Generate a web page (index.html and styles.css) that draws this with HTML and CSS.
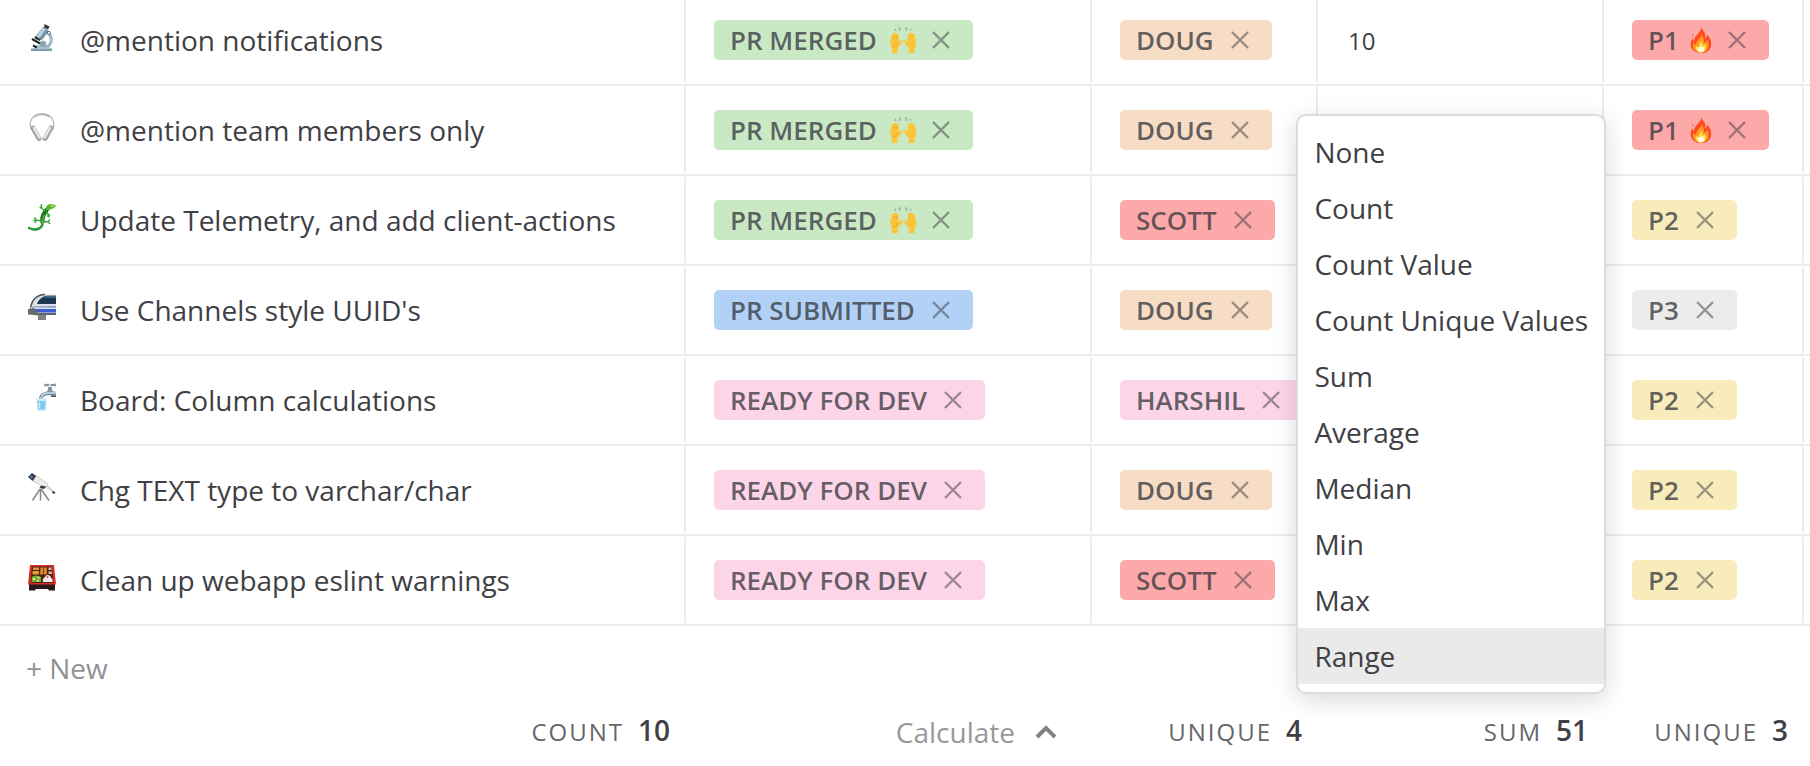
FILE: index.html
```html
<!DOCTYPE html>
<html lang="en">
<head>
    <meta charset="utf-8">
    <meta name="viewport" content="width=device-width, initial-scale=1">
    <title>Board</title>
    <link rel="stylesheet" href="styles.css">
</head>
<body>
    <!-- Shared icons -->
    <svg class="sprite" aria-hidden="true">
        <symbol id="close" viewBox="0 0 18 18">
            <path d="M1 1L17 17M17 1L1 17" fill="none" stroke="currentColor" stroke-width="2.4"/>
        </symbol>
        <symbol id="hands" viewBox="0 0 26 26">
            <path d="M4 3.500l1.500-2.500 1 3zM8.500 .5h2.500l-.8 3.500H9zM15 .5h2.500l-.5 3.500h-1.200zM19.500 3.500l.5-2.500 2 2.500z" fill="#a2b3a0"/>
            <path id="hand" d="M1 19.500L.2 13.200Q0 11.800 1.300 12l.3-4.500Q2.500 6.300 3.500 7.300L4 6.200Q5 5 6 6.200l.8.600q1.200-.9 1.800.4L9.200 15l2.400-1.600q1.500-.5 1.500.7l-3.600 5-2 2.500V26H2v-4.500z" fill="#fcc437"/>
            <path d="M2.500 20.500Q6 19.500 7.500 16M3.900 9v3M6.300 9v3M24 20.500Q20.500 19.500 19 16M22.600 9v3M20.200 9v3" fill="none" stroke="#dc9820" stroke-width=".7"/>
            <use href="#hand" transform="matrix(-1 0 0 1 26.500 0)"/>
        </symbol>
        <symbol id="fire" viewBox="0 0 22 26">
            <path d="M11.500 0c-.3 2.500 3.600 4.700 3.900 8.300.1 1.600-.2 2.600-.4 3.500 1.500-.8 2-2.600 2-4.200 2.800 2.700 4.400 6.400 4.200 9.800C21 22.300 17 26 11 26S.8 22.300.7 17.500C.6 14.800 1.500 13 3 11c0 1.600.2 2.800 1.200 3.700C3.300 8.800 10.800 6.500 11.500 0z" fill="#ff4a1f"/>
            <path d="M2.500 6.500l1.200 2.200L2 9z" fill="#ff6a35"/>
            <path d="M11.800 7.500c1.800 3.300 2.500 5.500 2.200 8 1.700-.2 2.800-1.300 3.400-2.700 1.200 2 1.600 4.200 1 6.600C17.700 23.500 15 25.500 11 25.500S3.500 23 3 19.500c-.2-1.600 0-2.700.8-4.200.4 1.500 1.200 2.200 2.400 2.400-.5-4.200 4.300-6.200 5.600-10.200z" fill="#ff9a24"/>
            <path d="M11.500 13.500c.8 2.300.8 3.700.5 5 1.500 0 2.500-.4 3.400-1.400.8 2 .7 4-.3 5.800-1 1.700-2.300 2.500-4.300 2.500-2.700 0-5-1.700-5.200-4.700 0-.7.100-1.300.4-2 .8 1 1.700 1.300 2.900 1.200-.3-2.600 1.800-4 2.600-6.400z" fill="#ffe04f"/>
            <ellipse cx="11" cy="22.500" rx="3.200" ry="2.700" fill="#fffbe0"/>
        </symbol>
    </svg>

    <main class="board">
        <table class="grid">
            <colgroup>
                <col>
                <col class="col-status">
                <col class="col-owner">
                <col class="col-points">
                <col class="col-priority">
                <col class="col-end">
            </colgroup>
            <tbody>
                <tr>
                    <td>
                        <div class="cell title">
                            <svg class="emoji" viewBox="0 0 28 28">
                                <path d="M3 25.500h21V28H3z" fill="#7f9cac"/>
                                <path d="M6 25.500l3-3.500h10l4 3.500z" fill="#a9c3cf"/>
                                <path d="M19 9q5 3.500 4 9.500-1 4.500-6 6.500" fill="none" stroke="#9dbac8" stroke-width="3.200"/>
                                <circle cx="15" cy="21" r="3.200" fill="#8aa7b6"/>
                                <path d="M4 16l8 4.500M5 22.500l4 2" stroke="#24282c" stroke-width="2.200"/>
                                <path d="M15 4l6 4-7 9-7-3z" fill="#7895a8"/>
                                <path d="M14.500 5l3 1.500-6 8.500-3-1.500z" fill="#bcd4e2"/>
                                <path d="M16.500 1l5 2.500-1.500 3-4-2zM7 13l6 3.500-1.500 1.500-5-2.500z" fill="#34383c"/>
                                <circle cx="21" cy="10" r="1.600" fill="#edf3f5" stroke="#4f5d65" stroke-width=".8"/>
                            </svg>
                            <span>@mention notifications</span>
                        </div>
                    </td>
                    <td><div class="cell"><span class="chip green">PR MERGED<svg class="hands"><use href="#hands"/></svg><button aria-label="Remove"><svg><use href="#close"/></svg></button></span></div></td>
                    <td><div class="cell"><span class="chip orange">DOUG<button aria-label="Remove"><svg><use href="#close"/></svg></button></span></div></td>
                    <td><div class="cell number">10</div></td>
                    <td><div class="cell"><span class="chip red">P1<svg class="fire"><use href="#fire"/></svg><button aria-label="Remove"><svg><use href="#close"/></svg></button></span></div></td>
                    <td></td>
                </tr>
                <tr>
                    <td>
                        <div class="cell title">
                            <svg class="emoji" viewBox="0 0 28 28">
                                <path d="M3.500 17C0 9 4 1 14 1s14 8 10.500 16" fill="none" stroke="#b8b8bc" stroke-width="1.300"/>
                                <path d="M6.500 3.700Q14-1 21.500 3.700" fill="none" stroke="#b8b8bc" stroke-width="2"/>
                                <path d="M5 15l6 10.500M23 15l-6 10.500" stroke="#a2a2a8" stroke-width="5" stroke-linecap="round"/>
                                <path d="M6 15l5.500 9.500M22 15l-5.500 9.500" stroke="#e6e6ea" stroke-width="2.600" stroke-linecap="round"/>
                            </svg>
                            <span>@mention team members only</span>
                        </div>
                    </td>
                    <td><div class="cell"><span class="chip green">PR MERGED<svg class="hands"><use href="#hands"/></svg><button aria-label="Remove"><svg><use href="#close"/></svg></button></span></div></td>
                    <td><div class="cell"><span class="chip orange">DOUG<button aria-label="Remove"><svg><use href="#close"/></svg></button></span></div></td>
                    <td><div class="cell number"></div></td>
                    <td><div class="cell"><span class="chip red">P1<svg class="fire"><use href="#fire"/></svg><button aria-label="Remove"><svg><use href="#close"/></svg></button></span></div></td>
                    <td></td>
                </tr>
                <tr>
                    <td>
                        <div class="cell title">
                            <svg class="emoji" viewBox="0 0 28 28">
                                <path d="M1 25q7 3.500 11.500-.5 3-3 2-7t2-6.500q2.500-3 3.500-6" fill="none" stroke="#2b9a2f" stroke-width="2.500" stroke-linecap="round"/>
                                <path d="M15 20q-1.500-5 1-9 2-3 3-5" fill="none" stroke="#157a20" stroke-width="4.500"/>
                                <path d="M17.500 7q.5-6 5-6 4.500 0 5.500 2-2 3-5.500 3.500z" fill="#55b82a"/>
                                <path d="M22 2q3-.5 5 1l-3 1z" fill="#c7e052"/>
                                <path d="M17 8l-4-3 .5-4M11.500 4.500l3-.5M18 9l3 3-.5 2.500M19 13l3-.5M14 18l-6-1-1.500-2.500M5.500 17.500L8 17M8 17l-1 3M15 19l5-.500 2 2.500M20 18.500l2-2" fill="none" stroke="#3aa834" stroke-width="1.500"/>
                                <path d="M15 21q-1-6 1.500-9" fill="none" stroke="#8fd05a" stroke-width="1"/>
                            </svg>
                            <span>Update Telemetry, and add client-actions</span>
                        </div>
                    </td>
                    <td><div class="cell"><span class="chip green">PR MERGED<svg class="hands"><use href="#hands"/></svg><button aria-label="Remove"><svg><use href="#close"/></svg></button></span></div></td>
                    <td><div class="cell"><span class="chip red">SCOTT<button aria-label="Remove"><svg><use href="#close"/></svg></button></span></div></td>
                    <td><div class="cell number"></div></td>
                    <td><div class="cell"><span class="chip yellow">P2<button aria-label="Remove"><svg><use href="#close"/></svg></button></span></div></td>
                    <td></td>
                </tr>
                <tr>
                    <td>
                        <div class="cell title">
                            <svg class="emoji" viewBox="0 0 28 28">
                                <path d="M0 17h28v5H18v5h-8v-4.500L0 21.500z" fill="#7c8282"/>
                                <path d="M2 17Q4 2 17 1.500h11V20H8z" fill="#dde1e4"/>
                                <path d="M2.500 14.500Q5 2 17 1.500" fill="none" stroke="#4a525a" stroke-width="1.500"/>
                                <path d="M9 11Q12 3 20 3h8v8z" fill="#1d3850"/>
                                <path d="M14 4.500Q16 2.500 20 2.500h8v2.500z" fill="#3e6a8c"/>
                                <path d="M3 13.500l25-.5v1.500H4z" fill="#7f93cf"/>
                                <path d="M6 16h22v3.500H9z" fill="#3c5fd0"/>
                                <path d="M0 16l6-1 4 5.500V22L0 21z" fill="#646b6c"/>
                                <path d="M9 20h19v2H12z" fill="#5d6466"/>
                            </svg>
                            <span>Use Channels style UUID's</span>
                        </div>
                    </td>
                    <td><div class="cell"><span class="chip blue">PR SUBMITTED<button aria-label="Remove"><svg><use href="#close"/></svg></button></span></div></td>
                    <td><div class="cell"><span class="chip orange">DOUG<button aria-label="Remove"><svg><use href="#close"/></svg></button></span></div></td>
                    <td><div class="cell number"></div></td>
                    <td><div class="cell"><span class="chip gray">P3<button aria-label="Remove"><svg><use href="#close"/></svg></button></span></div></td>
                    <td></td>
                </tr>
                <tr>
                    <td>
                        <div class="cell title">
                            <svg class="emoji" viewBox="0 0 28 28">
                                <path d="M12.500 17q0-6.500 8-6.500H28" fill="none" stroke="#73889a" stroke-width="3.600"/>
                                <path d="M13 16q0-5.500 7-6h8" fill="none" stroke="#d3dfe8" stroke-width="1.300"/>
                                <path d="M20 4h4v3l2 2h-8l2-2z" fill="#8196a6"/>
                                <path d="M17 2h10" stroke="#71879a" stroke-width="2"/>
                                <circle cx="17.500" cy="2" r="1.600" fill="#8fa2b2"/>
                                <circle cx="22" cy="2" r="1.500" fill="#c5d2dc"/>
                                <circle cx="27" cy="2" r="1.600" fill="#8fa2b2"/>
                                <path d="M23 13.200h5" stroke="#3d4852" stroke-width="1.500"/>
                                <path d="M8 15.500h11L18 28h-8.500z" fill="#cfe9f7"/>
                                <path d="M9.500 18h8l-.8 8.500h-6.400z" fill="#80c9f0"/>
                                <path d="M11.500 19v6" stroke="#c5eafc" stroke-width="1.500"/>
                            </svg>
                            <span>Board: Column calculations</span>
                        </div>
                    </td>
                    <td><div class="cell"><span class="chip pink">READY FOR DEV<button aria-label="Remove"><svg><use href="#close"/></svg></button></span></div></td>
                    <td><div class="cell"><span class="chip pink">HARSHIL<button aria-label="Remove"><svg><use href="#close"/></svg></button></span></div></td>
                    <td><div class="cell number"></div></td>
                    <td><div class="cell"><span class="chip yellow">P2<button aria-label="Remove"><svg><use href="#close"/></svg></button></span></div></td>
                    <td></td>
                </tr>
                <tr>
                    <td>
                        <div class="cell title">
                            <svg class="emoji" viewBox="0 0 28 28">
                                <path d="M12 16L4.500 27.500M12.500 16v11.500M13 16l8 11.500" stroke="#8b8683" stroke-width="1.500"/>
                                <path d="M5 8L8 2.500 20 11l-2.500 4z" fill="#efebe8" stroke="#b5b0ac" stroke-width=".6"/>
                                <path d="M19.500 12l6.500 6-1 1.500-7.500-5z" fill="#d8d3d0"/>
                                <path d="M25 18l2.500 1.500L26 21l-2-1.500z" fill="#2c2c2e"/>
                                <path d="M0 4l4-4 4 3-3.500 5z" fill="#27313d"/>
                                <circle cx="3.500" cy="4" r="1.800" fill="#5270a0"/>
                                <path d="M11.500 15l1.500-2.500 5 1-2 2.500z" fill="#3b3836"/>
                            </svg>
                            <span>Chg TEXT type to varchar/char</span>
                        </div>
                    </td>
                    <td><div class="cell"><span class="chip pink">READY FOR DEV<button aria-label="Remove"><svg><use href="#close"/></svg></button></span></div></td>
                    <td><div class="cell"><span class="chip orange">DOUG<button aria-label="Remove"><svg><use href="#close"/></svg></button></span></div></td>
                    <td><div class="cell number"></div></td>
                    <td><div class="cell"><span class="chip yellow">P2<button aria-label="Remove"><svg><use href="#close"/></svg></button></span></div></td>
                    <td></td>
                </tr>
                <tr>
                    <td>
                        <div class="cell title">
                            <svg class="emoji" viewBox="0 0 28 28">
                                <path d="M1 21h26v6.500h-6L20 26H8l-1 1.500H1z" fill="#2a1a1a"/>
                                <path d="M2 2h24l2 19.500H0z" fill="#de2f26"/>
                                <path d="M4 3.500h20l1.500 16.500h-23z" fill="#4a2415"/>
                                <path d="M5 4.500h6v2.500H5zM4.500 8h6.500v3.500H4.500z" fill="#e2983b"/>
                                <path d="M12.500 4.500h2.700v7h-3zM16 4.500h2.700v7H16z" fill="#ef8a28"/>
                                <path d="M20.500 4.500h3V7h-3zM20.500 8.500h3.500V11h-3.500z" fill="#d5b8a0"/>
                                <path d="M4 13.500l4-1 5 1.500v5H3.500z" fill="#6fae2e"/>
                                <path d="M5 15h2v2H5zM9.500 13.500h2v2h-2zM9 17h2v1.500H9z" fill="#dbe98c"/>
                                <path d="M15 19q-1-3 2-5 1-2.500 3-2 2.500 0 3 2.500 2.500 2.500 1.500 4.500z" fill="#f3e9e6"/>
                                <circle cx="19.500" cy="14" r="1" fill="#e24a3b"/>
                            </svg>
                            <span>Clean up webapp eslint warnings</span>
                        </div>
                    </td>
                    <td><div class="cell"><span class="chip pink">READY FOR DEV<button aria-label="Remove"><svg><use href="#close"/></svg></button></span></div></td>
                    <td><div class="cell"><span class="chip red">SCOTT<button aria-label="Remove"><svg><use href="#close"/></svg></button></span></div></td>
                    <td><div class="cell number"></div></td>
                    <td><div class="cell"><span class="chip yellow">P2<button aria-label="Remove"><svg><use href="#close"/></svg></button></span></div></td>
                    <td></td>
                </tr>
            </tbody>
            <tfoot>
                <tr class="new-row">
                    <td colspan="6"><button class="new-btn">+ New</button></td>
                </tr>
                <tr class="calc-row">
                    <td><div class="calc"><span>COUNT</span><b>10</b></div></td>
                    <td>
                        <button class="calc-btn">Calculate
                            <svg viewBox="0 0 22 14"><path d="M2 12l9-9 9 9" fill="none" stroke="currentColor" stroke-width="4"/></svg>
                        </button>
                    </td>
                    <td><div class="calc"><span>UNIQUE</span><b>4</b></div></td>
                    <td>
                        <div class="calc"><span>SUM</span><b>51</b></div>
                        <div class="menu" role="menu">
                            <button role="menuitem">None</button>
                            <button role="menuitem">Count</button>
                            <button role="menuitem">Count Value</button>
                            <button role="menuitem">Count Unique Values</button>
                            <button role="menuitem">Sum</button>
                            <button role="menuitem">Average</button>
                            <button role="menuitem">Median</button>
                            <button role="menuitem">Min</button>
                            <button role="menuitem">Max</button>
                            <button role="menuitem" class="active">Range</button>
                        </div>
                    </td>
                    <td><div class="calc"><span>UNIQUE</span><b>3</b></div></td>
                    <td></td>
                </tr>
            </tfoot>
        </table>
    </main>
</body>
</html>
```
FILE: styles.css
```css
body {
    margin: 0;
    background-color: #fff;
    color: #3f4045;
    font-family: "Open Sans", sans-serif;
    font-size: 28px;
    line-height: 40px;
}
button {
    margin: 0;
    padding: 0;
    border: none;
    background: none;
    color: inherit;
    font: inherit;
    cursor: pointer;
}
svg {
    display: block;
    flex: none;
}
.sprite {
    position: absolute;
    width: 0;
    height: 0;
}
.board {
    overflow: hidden;
}
.grid {
    width: 100%;
    margin-top: -4px;
    table-layout: fixed;
    border-collapse: separate;
    border-spacing: 0;
}
.col-status {
    width: 406px;
}
.col-owner {
    width: 226px;
}
.col-points {
    width: 286px;
}
.col-priority {
    width: 200px;
}
.col-end {
    width: 6px;
}
td {
    padding: 0;
    white-space: nowrap;
}
tbody td {
    padding: 1px 0;
    border-bottom: 2px solid #ececec;
}
.cell {
    display: flex;
    align-items: center;
    box-sizing: border-box;
    height: 86px;
    padding-left: 28px;
    border-right: 2px solid #ececec;
    border-radius: 1px;
}
.title {
    gap: 24px;
}
.emoji {
    width: 28px;
    height: 28px;
    margin-bottom: 6px;
}
.number {
    padding-top: 2px;
    padding-left: 30px;
    font-size: 24px;
}

/* Chips */
.chip {
    display: flex;
    align-items: center;
    height: 40px;
    padding-left: 16px;
    border-radius: 5px;
    color: rgba(60, 60, 67, 0.78);
    font-size: 26px;
    font-weight: 600;
}
.chip button {
    display: flex;
    padding: 11px 23px 11px 17px;
    color: rgba(60, 60, 67, 0.5);
}
.chip button svg {
    width: 18px;
    height: 18px;
}
.chip .hands {
    width: 26px;
    height: 26px;
    margin-left: 13px;
}
.chip .fire {
    width: 22px;
    height: 26px;
    margin-left: 11px;
}
.chip svg + button {
    padding-left: 16px;
}
.green {
    background-color: #c9e9c5;
}
.orange {
    background-color: #f7ddc5;
}
.red {
    background-color: #fda9a9;
}
.blue {
    background-color: #b1d2f6;
}
.pink {
    background-color: #fdd5e8;
}
.yellow {
    background-color: #f8edba;
}
.gray {
    background-color: #ececec;
}

/* Footer */
.new-row td {
    height: 84px;
    vertical-align: top;
}
.new-btn {
    padding: 22px 26px;
    color: #929295;
}
.calc-row td {
    position: relative;
    height: 56px;
    vertical-align: top;
}
.calc {
    display: flex;
    align-items: baseline;
    justify-content: flex-end;
    gap: 14px;
    padding-right: 16px;
}
.calc span {
    color: #66676b;
    font-size: 24px;
    letter-spacing: 2px;
}
.calc b {
    font-weight: 600;
}
.calc-btn {
    display: flex;
    align-items: center;
    gap: 20px;
    margin-left: auto;
    padding-top: 2px;
    padding-right: 35px;
    color: #98989b;
}
.calc-btn svg {
    width: 22px;
    height: 14px;
    color: #828285;
}

/* Calculation menu */
.menu {
    position: absolute;
    right: -2px;
    bottom: 100%;
    margin-bottom: 16px;
    padding: 8px 0;
    border: 2px solid #dcdcdc;
    border-radius: 10px;
    background-color: #fff;
    box-shadow: 0 6px 24px rgba(0, 0, 0, 0.15);
}
.menu button {
    display: block;
    width: 100%;
    padding: 8px 16px;
    text-align: left;
}
.menu .active {
    background-color: #eaeaea;
}
```
